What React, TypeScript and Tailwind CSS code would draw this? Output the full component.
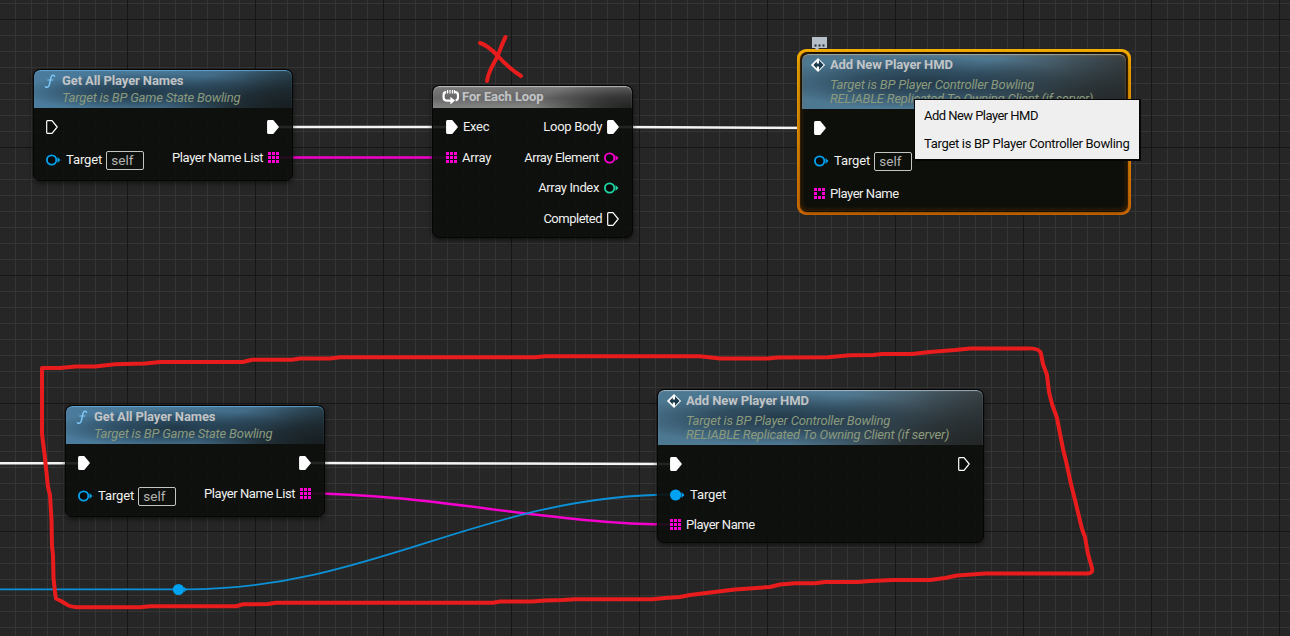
import type { ReactNode } from 'react'
import clsx from 'clsx'

type PinKind = 'exec' | 'value' | 'array'
type Pin = {
  kind: PinKind
  label?: string
  tracking?: string
  color?: string
  filled?: boolean
  self?: boolean
  row?: string
}

const PINK = '#ff00d4'
const BLUE = '#00a2f2'
const MINT = '#1fd6a4'

function PinIcon({ kind, color = '#fff', filled, row }: Pin) {
  if (kind === 'exec') {
    return (
      <svg width="12" height="14" viewBox="0 0 12 14" className="shrink-0">
        <path
          d="M1.4 .7H6L11.2 7L6 13.3H1.4Q.7 13.3 .7 12.6V1.4Q.7 .7 1.4 .7Z"
          fill={filled ? '#fff' : '#0a0c0a'}
          stroke="#fff"
          strokeWidth="1.2"
          strokeLinejoin="round"
        />
      </svg>
    )
  }
  if (kind === 'array') {
    const cells = [0, 1, 2, 3, 4, 5, 6, 7, 8].filter((i) => filled || i !== 4)
    // even-height rows need an even-height box to stay on whole pixels
    return (
      <svg width="11" height="11" viewBox="0 0 11 11" className={clsx('shrink-0', !row && 'mb-px')}>
        {cells.map((i) => (
          <rect key={i} x={(i % 3) * 4} y={Math.floor(i / 3) * 4} width="3" height="3" fill={color} />
        ))}
      </svg>
    )
  }
  return (
    <svg width="15" height="12" viewBox="0 0 15 12" className="shrink-0">
      <circle cx="5.6" cy="6" r="4.7" fill={filled ? color : '#060908'} stroke={color} strokeWidth="1.8" />
      <path d="M11.5 3L14.5 6L11.5 9Z" fill={color} />
    </svg>
  )
}

function PinRow({ pin, side }: { pin: Pin; side: 'in' | 'out' }) {
  return (
    <div className={clsx('flex items-center', side === 'out' && 'flex-row-reverse', pin.row ?? 'h-[30px]')}>
      <PinIcon {...pin} />
      {pin.label && (
        <span
          className={clsx(
            'whitespace-nowrap text-[13px] leading-4 text-[#f0f0f0]',
            side === 'in' ? 'ml-[5px]' : 'mr-[5px]',
            pin.tracking ?? 'tracking-[-0.44px]',
          )}
        >
          {pin.label}
        </span>
      )}
      {pin.self && (
        <span className="ml-1 flex h-[19px] w-[38px] items-center rounded-[2px] border border-[#c4c4c4] pl-1 text-[13.5px] leading-4 text-[#b4b4b4]">
          self
        </span>
      )}
    </div>
  )
}

function FunctionIcon() {
  return (
    <svg className="ml-[2px]" width="12" height="15" viewBox="0 0 12 15" fill="none" stroke="#7cc6f8" strokeLinecap="round">
      <path d="M10.6 2.1C9.4 .6 7.6 1 7 3.4L5.3 10.8C4.8 13.2 2.8 14 1.4 12.7" strokeWidth="1.5" />
      <path d="M3.8 6H8.8" strokeWidth="1.2" />
    </svg>
  )
}

function EventIcon() {
  return (
    <svg width="16" height="16" viewBox="0 0 16 16">
      <path d="M8 .9L15.1 8L8 15.1L.9 8Z" fill="#fff" />
      <path d="M9 3.3L13.6 8L9 12.7V9.6H6.8V11.4L3.4 8L6.8 4.600V6.400H9Z" fill="#1b3a4d" />
    </svg>
  )
}

function LoopIcon() {
  return (
    <svg width="18" height="16" viewBox="0 0 18 16" fill="none" stroke="#fff">
      <path d="M4.2 3.2Q1.6 3.2 1.6 6V8.6Q1.6 11.6 4.6 11.6H9" strokeWidth="2.2" />
      <path d="M13 3.2Q16 3.2 16 6V8.6Q16 11 13.6 11.4" strokeWidth="2.2" />
      <path d="M8.4 7.8L13 11.5L8.4 15.4Z" fill="#fff" stroke="none" />
      <path d="M5.6 1V4.6M8 1V4.6M10.4 1V4.6M12.4 1V4.6" strokeWidth="1.2" />
    </svg>
  )
}

const HEADER_STYLES = {
  blue: 'pl-2 shadow-[inset_0_1px_1px_rgba(110,180,230,0.75)] bg-[radial-gradient(ellipse_48%_50%_at_42%_58%,rgba(24,42,55,0.8)_0%,rgba(24,42,55,0.55)_45%,transparent_100%),radial-gradient(ellipse_50%_110%_at_100%_100%,#171d1f_0%,rgba(26,36,41,0.85)_45%,transparent_100%),linear-gradient(90deg,#4b7c9d_0%,#467391_55%,#3f6680_80%,#2c4654_100%)]',
  steel: 'pl-2 shadow-[inset_0_1px_1px_rgba(190,205,215,0.75)] bg-[radial-gradient(ellipse_48%_48%_at_38%_52%,rgba(24,42,55,0.8)_0%,rgba(24,42,55,0.55)_45%,transparent_100%),radial-gradient(ellipse_60%_120%_at_100%_100%,#222525_0%,rgba(38,45,48,0.85)_40%,transparent_100%),linear-gradient(90deg,#4d7892_0%,#507a94_55%,#506c7d_78%,#3f474b_100%)]',
  gray: 'pl-[9px] shadow-[inset_0_1px_1px_rgba(220,220,220,0.7)] bg-[radial-gradient(ellipse_50%_130%_at_100%_100%,#202020_0%,rgba(40,40,40,0.8)_40%,transparent_100%),linear-gradient(180deg,#7c7c7c_0%,#686868_55%,#858585_100%)]',
}

type NodeProps = {
  className: string
  header: string
  tone: keyof typeof HEADER_STYLES
  icon: ReactNode
  title: string
  subtitle?: string[]
  subtitleGap?: string
  padding?: string
  inputs: Pin[]
  outputs: Pin[]
}

function GraphNode(props: NodeProps) {
  const { className, header, tone, icon, title, subtitle = [], subtitleGap, padding = 'pl-3 pr-[13px]', inputs, outputs } = props
  return (
    <section
      className={clsx(
        'absolute flex flex-col overflow-hidden rounded-[7px] border border-[#050505] bg-[#0c0e0b]/90 shadow-[0_2px_5px_rgba(0,0,0,0.55)]',
        className,
      )}
    >
      <header className={clsx('flex shrink-0 items-start rounded-t-[6px]', header, HEADER_STYLES[tone])}>
        <span className="mt-[3px] flex h-4 w-5 shrink-0 items-center">{icon}</span>
        <div>
          <h2 className="mt-[3px] whitespace-nowrap text-[13px] font-bold leading-4 tracking-[-0.11px] text-[#c1c4c6]">{title}</h2>
          <div className={subtitleGap}>
            {subtitle.map((line) => (
              <p key={line} className="whitespace-nowrap text-[13px] italic leading-[14px] tracking-[-0.19px] text-[#8b9a7d]">
                {line}
              </p>
            ))}
          </div>
        </div>
      </header>
      <div className={clsx('flex justify-between pt-1', padding)}>
        <div className="flex flex-col">
          {inputs.map((pin, i) => (
            <PinRow key={i} pin={pin} side="in" />
          ))}
        </div>
        <div className="flex flex-col">
          {outputs.map((pin, i) => (
            <PinRow key={i} pin={pin} side="out" />
          ))}
        </div>
      </div>
    </section>
  )
}

function Wires() {
  return (
    <svg className="absolute inset-0" width="1290" height="636" fill="none">
      <g stroke="#f4f4f4" strokeWidth="2.6">
        <path d="M275 127H452" />
        <path d="M615 127L818 128" />
        <path d="M0 463.3H82" />
        <path d="M305 463L675 464" />
      </g>
      <g stroke="#f400cc" strokeWidth="2.5">
        <path d="M275 157.5H450" />
        <path d="M306 493.5C430 493.5 550 524.5 675 524.5" />
      </g>
      <g stroke="#0c90d6" strokeWidth="1.8">
        <path d="M0 589.4H178" />
        <path d="M186 589.4C374 589.4 484 494.5 675 494.5" />
      </g>
    </svg>
  )
}

function RerouteKnot() {
  return (
    <svg className="absolute left-[172px] top-[583px]" width="16" height="13" viewBox="0 0 16 13" fill={BLUE}>
      <circle cx="6.5" cy="6.5" r="5.6" />
      <path d="M12.2 3.8L14.8 6.5L12.2 9.2Z" />
    </svg>
  )
}

// Freehand red marker strokes drawn over the graph
function Markup() {
  return (
    <svg
      className="absolute inset-0"
      width="1290"
      height="636"
      fill="none"
      stroke="#e81c1c"
      strokeWidth="4"
      strokeLinecap="round"
      strokeLinejoin="round"
    >
      <path d="M480 43C487 45 492 50 497 55C504 63 513 71 521 76" />
      <path d="M505.5 37C501 46 499 54 495 61C491 68 488 74 487 81" />
      <path d="M42 368H60L76 366.5L95 366.5L115 364.3L145 363.5L160 362L243 362L252 359.7H292L300 358.5H330L340 357.3H535L545 356.3H700L720 358.6H768L778 357.5L828 357.3L850 355.3L873 355L882 354H912L930 352L955 350L970 348.4H1028Q1040 348 1041 354L1043 364L1047 375L1049 392L1052 404L1057 418L1063 449L1066 461L1071 484L1076 504L1082 529L1085 537L1088 554L1092 568Q1093 573.4 1088 573.4H985L957 575.5L945 578L930 580H893L870 581L858 582H825L815 583.3H795L780 584.5L770 587L735 589.5L690 595L680 597L665 598L652 599.3H575L563 600L545 600.5L532 601.5H500L493 602.7H276L268 604L243 604.3L236 606.2H150L140 607.3H77Q70 607 66 604L61 601L56 598.5L55 592L53.5 578L53 555L52 546L51.5 520L50 495L48 487L44.5 454L42 434V368" />
    </svg>
  )
}

const EXEC: Pin = { kind: 'exec', filled: true }
const TARGET: Pin = { kind: 'value', label: 'Target', tracking: 'tracking-[-0.1px]', color: BLUE }
const TARGET_SELF: Pin = { ...TARGET, self: true, row: 'h-[36px]' }

const nameListNode = {
  header: 'h-[38px]',
  tone: 'blue' as const,
  icon: <FunctionIcon />,
  title: 'Get All Player Names',
  subtitle: ['Target is BP Game State Bowling'],
  subtitleGap: 'mt-[2px]',
  outputs: [EXEC, { kind: 'array', label: 'Player Name List', color: PINK, filled: true, row: 'h-[31px]' }] as Pin[],
}

const hmdNode = {
  header: 'h-[55px]',
  tone: 'steel' as const,
  icon: <EventIcon />,
  title: 'Add New Player HMD',
  subtitle: ['Target is BP Player Controller Bowling', 'RELIABLE Replicated To Owning Client (if server)'],
  subtitleGap: 'mt-[5px]',
}

export default function App() {
  return (
    <main className="relative h-[636px] w-[1290px] overflow-hidden bg-[#262626] font-[Roboto,sans-serif]">
      <svg className="absolute inset-0" width="1290" height="636" shapeRendering="crispEdges">
        <defs>
          <pattern id="minor" x="15" y="3" width="16" height="16" patternUnits="userSpaceOnUse">
            <path d="M0 0H16V1H1V16H0Z" fill="#353535" />
          </pattern>
          <pattern id="major" x="127" y="19" width="128" height="128" patternUnits="userSpaceOnUse">
            <path d="M0 0H128V1H1V128H0Z" fill="#161616" />
          </pattern>
        </defs>
        <rect width="1290" height="636" fill="url(#minor)" />
        <rect width="1290" height="636" fill="url(#major)" />
      </svg>
      <Wires />
      <RerouteKnot />

      <GraphNode
        {...nameListNode}
        className="left-[33px] top-[69px] h-[112px] w-[260px]"
        inputs={[{ kind: 'exec' }, TARGET_SELF]}
      />
      <GraphNode
        className="left-[432px] top-[85px] h-[153px] w-[201px]"
        header="h-[22px]"
        tone="gray"
        icon={<LoopIcon />}
        title="For Each Loop"
        padding="px-[13px]"
        inputs={[
          { kind: 'exec', label: 'Exec', tracking: 'tracking-[-0.3px]', filled: true },
          { kind: 'array', label: 'Array', tracking: 'tracking-[-0.2px]', color: PINK, filled: true, row: 'h-[31px]' },
        ]}
        outputs={[
          { kind: 'exec', label: 'Loop Body', tracking: 'tracking-[-0.3px]', filled: true },
          { kind: 'value', label: 'Array Element', color: PINK, row: 'h-[31px]' },
          { kind: 'value', label: 'Array Index', tracking: 'tracking-[-0.36px]', color: MINT },
          { kind: 'exec', label: 'Completed', tracking: 'tracking-[-0.5px]', row: 'h-8' },
        ]}
      />

      <div className="absolute left-[797px] top-[49px] h-[166px] w-[334px] rounded-[9px] bg-[linear-gradient(180deg,#f5ad00,#d06a00)] p-[3px]">
        <div className="h-full rounded-[7px] bg-[#1c1509]" />
      </div>
      <svg className="absolute left-[811px] top-[36px]" width="17" height="15" viewBox="0 0 17 15">
        <path d="M1 1H16V12H8L6 14.5L4 12H1Z" fill="#b7c0c8" />
        <path d="M3.5 8.5H5.5V10.5H3.5ZM7.5 8.5H9.5V10.5H7.5ZM11.5 8.5H13.5V10.5H11.5Z" fill="#222a30" />
      </svg>
      <GraphNode
        {...hmdNode}
        className="left-[801px] top-[53px] h-[157px] w-[326px]"
        inputs={[EXEC, TARGET_SELF, { kind: 'array', label: 'Player Name', color: PINK }]}
        outputs={[]}
      />
      {/* selection glow bleeding over the node's edge */}
      <div className="absolute left-[800px] top-[53px] h-[158px] w-[328px] rounded-[7px] shadow-[inset_0_0_5px_1px_rgba(150,85,0,0.4)]" />

      <GraphNode
        {...nameListNode}
        className="left-[65px] top-[405px] h-[112px] w-[260px]"
        inputs={[EXEC, TARGET_SELF]}
      />
      <GraphNode
        {...hmdNode}
        className="left-[657px] top-[389px] h-[154px] w-[327px]"
        inputs={[
          EXEC,
          { ...TARGET, filled: true, row: 'h-[31px]' },
          { kind: 'array', label: 'Player Name', color: PINK, filled: true },
        ]}
        outputs={[{ kind: 'exec' }]}
      />

      <Markup />

      <div
        role="tooltip"
        className="absolute left-[914px] top-[99px] flex h-[62px] w-[227px] flex-col gap-3 border-b-2 border-l border-r-2 border-t border-[#050505] bg-[#efefef] pl-[9px] pt-2 text-[13px] leading-4 text-[#0a0a0a]"
      >
        <p className="whitespace-nowrap tracking-[-0.54px]">Add New Player HMD</p>
        <p className="whitespace-nowrap tracking-[-0.32px]">Target is BP Player Controller Bowling</p>
      </div>
    </main>
  )
}
